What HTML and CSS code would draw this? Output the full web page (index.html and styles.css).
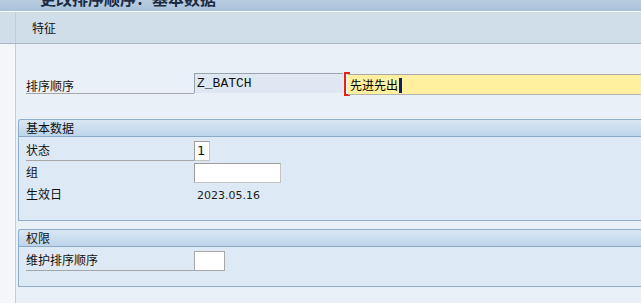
FILE: index.html
```html
<!DOCTYPE html>
<html lang="zh">
<head>
    <meta charset="UTF-8">
    <title>更改排序顺序：基本数据</title>
    <link rel="stylesheet" href="styles.css">
</head>
<body>
    <div class="titlebar"><div class="title">更改排序顺序：基本数据</div></div>

    <div class="toolbar">
        <div class="toolbar-inner">特征</div>
    </div>

    <div class="main">
        <div class="side"></div>
        <div class="content">

            <!-- 排序顺序 -->
            <div class="row first">
                <div class="lbl line">排序顺序</div>
                <div class="field readonly">Z_BATCH</div>
                <div class="mark"></div>
                <div class="field active">先进先出<span class="caret"></span></div>
            </div>

            <!-- 基本数据 -->
            <div class="group">
                <div class="group-head">基本数据</div>
                <div class="group-body">
                    <div class="row">
                        <div class="lbl line">状态</div>
                        <div class="inp small">1</div>
                    </div>
                    <div class="row">
                        <div class="lbl">组</div>
                        <div class="inp wide"></div>
                    </div>
                    <div class="row">
                        <div class="lbl">生效日</div>
                        <div class="value">2023.05.16</div>
                    </div>
                </div>
            </div>

            <!-- 权限 -->
            <div class="group">
                <div class="group-head">权限</div>
                <div class="group-body">
                    <div class="row">
                        <div class="lbl line">维护排序顺序</div>
                        <div class="inp check"></div>
                    </div>
                </div>
            </div>

        </div>
    </div>
</body>
</html>
```

FILE: styles.css
```css
html, body {
    margin: 0;
    overflow: hidden;
    height: 303px;
}

body {
    font-family: "Noto Sans CJK SC", "Liberation Sans", sans-serif;
    font-size: 12px;
    color: #111;
    background: #e9f0f8;
}

.titlebar {
    height: 11px;
    overflow: hidden;
    border-bottom: 1px solid #f4f8fc;
    background: linear-gradient(#b9cde1, #a9c1d9);
}

.title {
    margin-top: -12px;
    padding-left: 40px;
    font-size: 16px;
    line-height: 20px;
    font-weight: bold;
    color: #1c2c44;
    white-space: nowrap;
}

.toolbar {
    background: #d0dee9;
    border-bottom: 1px solid #a8b8c8;
    padding-left: 15px;
}

.toolbar-inner {
    height: 31px;
    line-height: 31px;
    padding-left: 16px;
    border-left: 1px solid #c0ccd8;
}

.main {
    display: flex;
}

.side {
    width: 15px;
    flex: none;
    height: 259px;
    background: #f4f6f9;
}

.content {
    flex: 1;
    min-width: 0;
    border-left: 1px solid #c4ccd6;
    padding-top: 29px;
    height: 230px;
}

.row {
    display: flex;
    align-items: flex-end;
    height: 21px;
    margin-bottom: 1px;
}

.row.first {
    padding-left: 10px;
    margin-bottom: 25px;
}

.lbl {
    width: 168px;
    flex: none;
    box-sizing: border-box;
    height: 21px;
    padding-top: 3px;
    line-height: 14px;
    white-space: nowrap;
}

.row.first .lbl {
    padding-top: 6px;
}

.lbl.line {
    border-bottom: 1px solid #a6a6a6;
}

.field {
    box-sizing: border-box;
    height: 20px;
    flex: none;
    padding-left: 2px;
    white-space: nowrap;
}

.field.readonly {
    width: 149px;
    margin-bottom: 1px;
    background: #dfe8f2;
    border-top: 1px solid #9aa4ae;
    border-left: 1px solid #9aa4ae;
    font-family: "Liberation Mono", monospace;
    font-size: 13px;
    line-height: 19px;
}

.mark {
    flex: none;
    width: 4px;
    height: 20px;
    margin-left: 1px;
    margin-right: -2px;
    margin-bottom: -2px;
    border: 2px solid #e2231a;
    border-right: none;
}

.field.active {
    flex: 1;
    min-width: 0;
    height: 21px;
    margin-bottom: -1px;
    background: #fff0a0;
    border-top: 1px solid #a8a8a8;
    border-bottom: 1px solid #b4b4b4;
    font-size: 12px;
    line-height: 19px;
    color: #000;
    overflow: hidden;
}

.caret {
    display: inline-block;
    width: 3px;
    height: 15px;
    margin-left: 1px;
    vertical-align: -3px;
    background: #0c1f6a;
}

.group {
    margin-left: 2px;
    margin-bottom: 8px;
    border: 1px solid #8eaccb;
    border-right: none;
    border-radius: 3px 0 0 0;
    background: #dde9f4;
}

.group-head {
    height: 16px;
    line-height: 16px;
    padding-left: 7px;
    border-bottom: 1px solid #8aa8c8;
    border-radius: 3px 0 0 0;
    background: linear-gradient(#d9e7f3, #bdd4ea);
}

.group-body {
    padding: 3px 0 14px 7px;
}

.inp {
    box-sizing: border-box;
    height: 20px;
    flex: none;
    background: #fff;
    border: 1px solid #a9a9a9;
    border-color: #9c9c9c #c4c4c4 #c4c4c4 #9c9c9c;
    padding-left: 2px;
    font-family: "DejaVu Sans", sans-serif;
    font-size: 13px;
    line-height: 18px;
}

.inp.small {
    width: 16px;
}

.inp.wide {
    width: 87px;
}

.inp.check {
    width: 31px;
    border-color: #a8a8a8;
}

.value {
    height: 21px;
    box-sizing: border-box;
    padding-top: 4px;
    padding-left: 3px;
    line-height: 16px;
    font-family: "DejaVu Sans", sans-serif;
    font-size: 11px;
    color: #1c1c1c;
}
```
